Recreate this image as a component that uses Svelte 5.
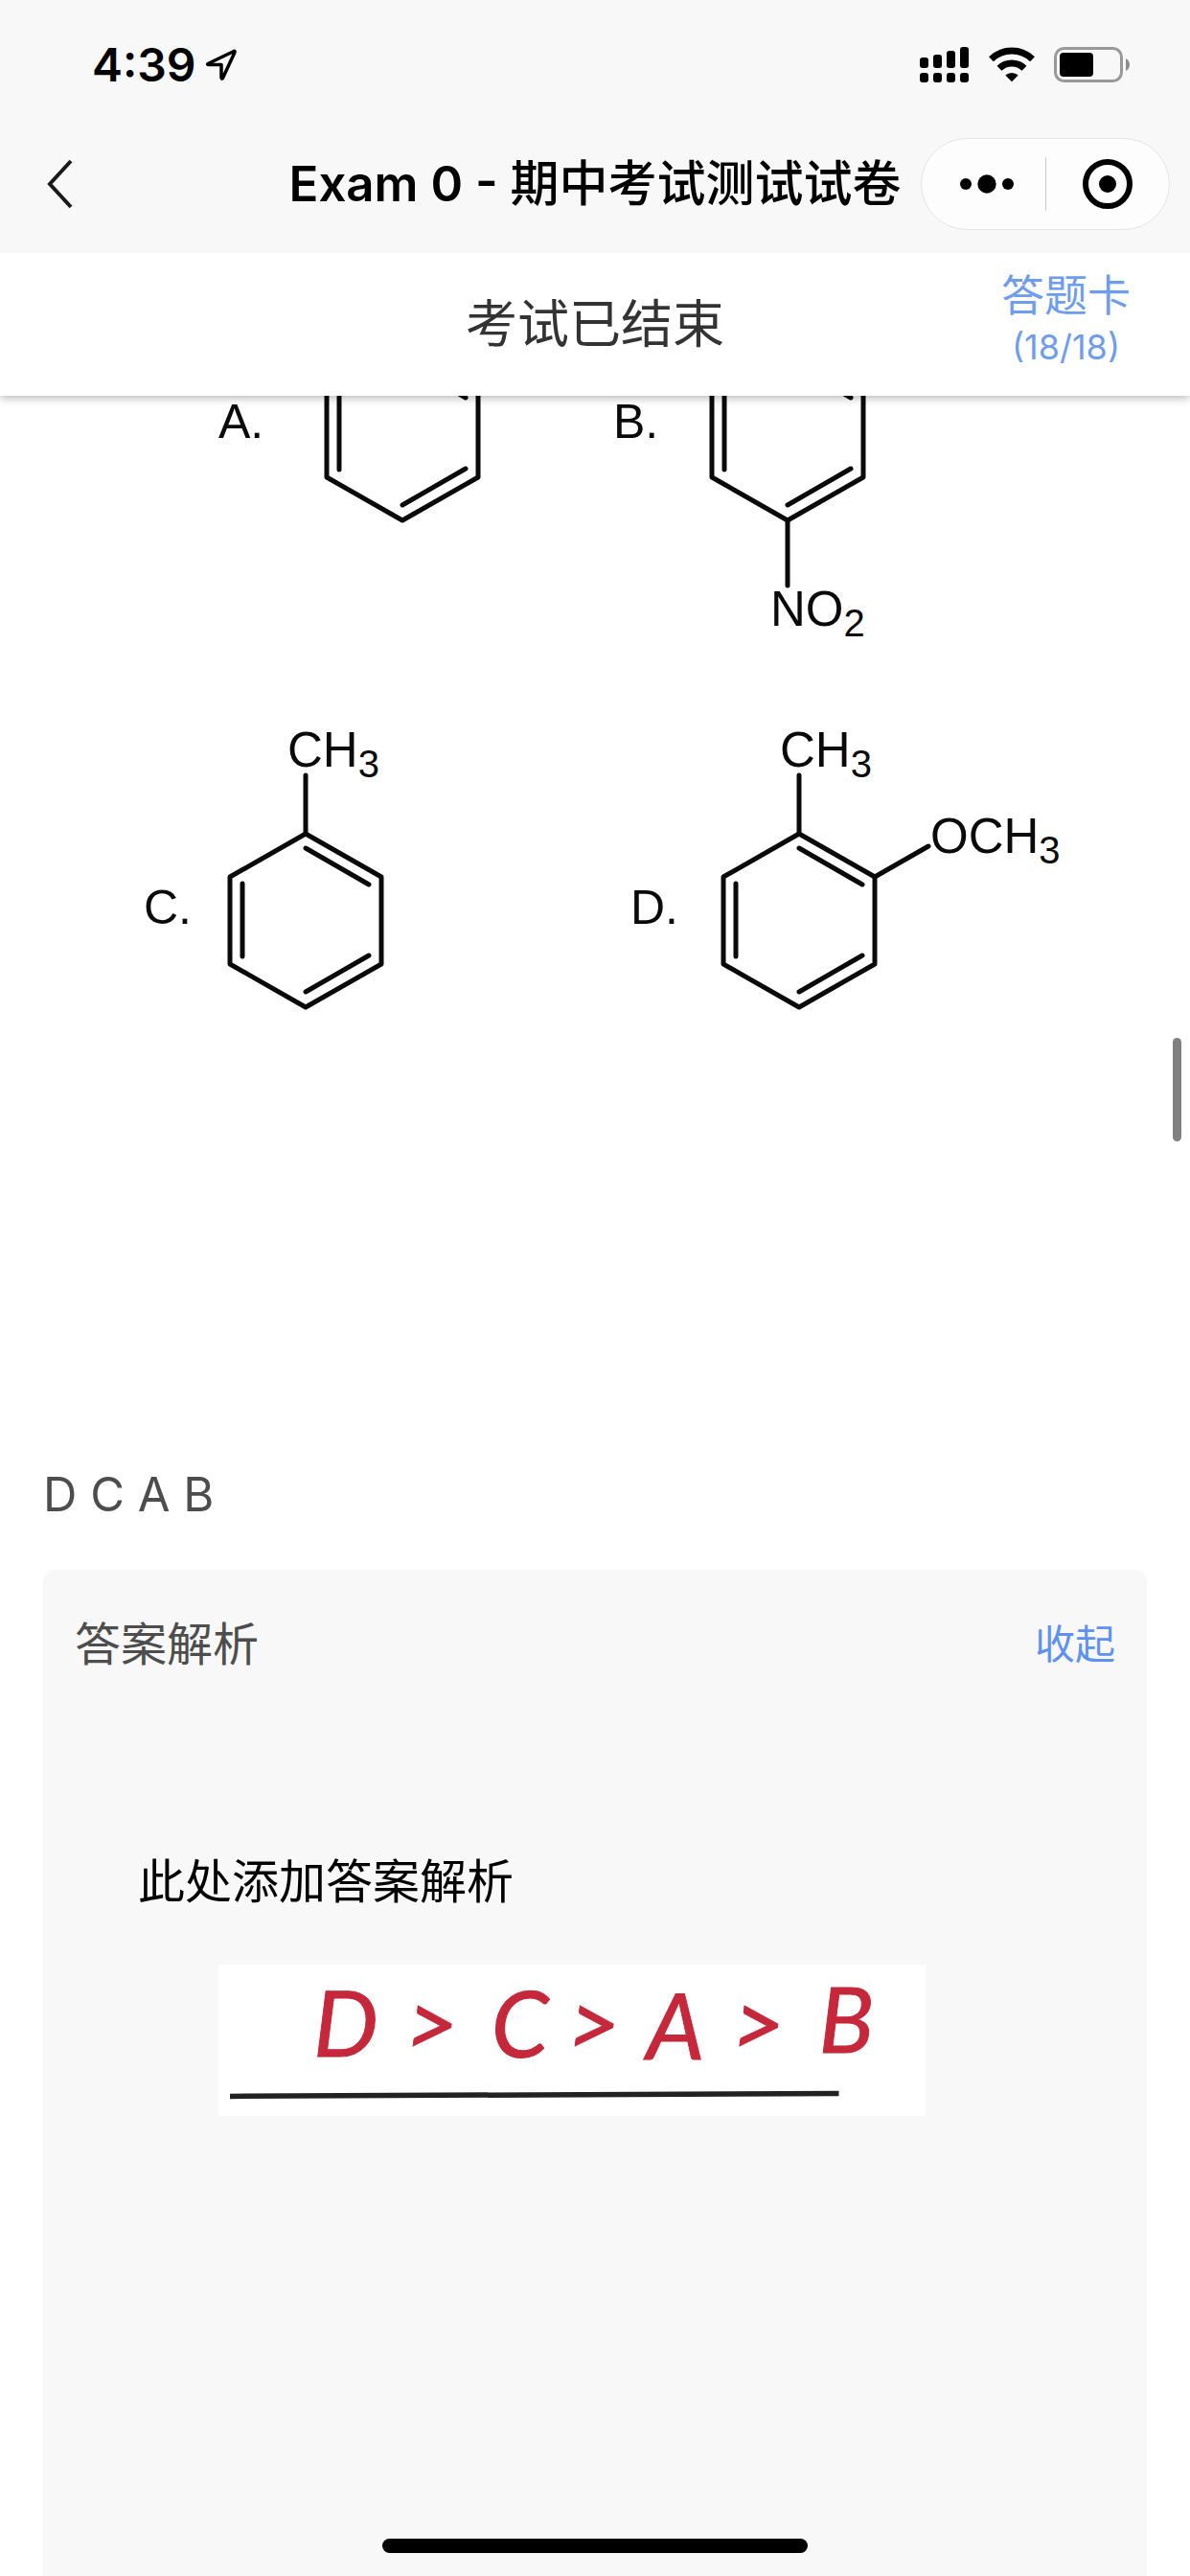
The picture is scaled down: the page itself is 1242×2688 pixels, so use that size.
<script>
  const answer = ['D', 'C', 'A', 'B'];
  const answered = 18;
  const total = 18;
  let expanded = $state(true);

  // Top vertex of every benzene ring in the question figure.
  const rings = [
    { x: 420, y: -51 },
    { x: 822, y: -51 },
    { x: 319, y: 457 },
    { x: 834, y: 457 }
  ];

  const labels = [
    { x: 228, y: 44, text: 'A.' },
    { x: 640, y: 44, text: 'B.' },
    { x: 150, y: 551, text: 'C.' },
    { x: 658, y: 551, text: 'D.' }
  ];

  const groups = [
    { x: 804, y: 240, text: 'NO', sub: '2' },
    { x: 300, y: 387, text: 'CH', sub: '3' },
    { x: 814, y: 387, text: 'CH', sub: '3' },
    { x: 971, y: 477, text: 'OCH', sub: '3' }
  ];
</script>

<div class="screen">
  <header class="top">
    <div class="status">
      <div class="clock">
        <span>4:39</span>
        <svg width="34" height="36" viewBox="0 0 34 36" aria-hidden="true">
          <path d="M30 3.500L3 16.500Q2 17.500 4 17.500H17V31Q17.500 33 18.500 31.500L31 4.500Q31.500 3 30 3.500Z" fill="none" stroke="#000" stroke-width="3.500" stroke-linejoin="round" />
        </svg>
      </div>
      <div class="signals">
        <svg width="52" height="38" viewBox="0 0 52 38" aria-hidden="true">
          <rect x="0" y="11" width="9" height="11" rx="3" />
          <rect x="14" y="8" width="9" height="14" rx="3" />
          <rect x="28" y="4" width="9" height="18" rx="3" />
          <rect x="42" y="0" width="9" height="22" rx="3" />
          <rect x="0" y="27" width="9" height="10" rx="3" />
          <rect x="14" y="27" width="9" height="10" rx="3" />
          <rect x="28" y="27" width="9" height="10" rx="3" />
          <rect x="42" y="27" width="9" height="10" rx="3" />
        </svg>
        <svg width="48" height="38" viewBox="0 0 48 38" aria-hidden="true">
          <path d="M2.500 12.700A31 31 0 0 1 45.500 12.700" fill="none" stroke="#000" stroke-width="7" />
          <path d="M11 22.300A18.500 18.500 0 0 1 37 22.300" fill="none" stroke="#000" stroke-width="7" />
          <path d="M17.300 29.500A10 10 0 0 1 30.700 29.500L24 36.200Z" />
        </svg>
        <svg width="80" height="38" viewBox="0 0 80 38" aria-hidden="true">
          <rect x="1.500" y="1.500" width="69" height="34" rx="9" fill="none" stroke="#999" stroke-width="3" />
          <rect x="6" y="6" width="35" height="25" rx="4" />
          <path d="M75 12Q79 14.500 79 18.500T75 25Z" fill="#8c8c8c" />
        </svg>
      </div>
    </div>
    <div class="nav">
      <button class="back" aria-label="Back">
        <svg width="30" height="54" viewBox="0 0 30 54" aria-hidden="true">
          <path d="M26 3L4 27L26 51" fill="none" stroke="#1a1a1a" stroke-width="4" />
        </svg>
      </button>
      <h1>Exam 0 - <span>期中考试测试试卷</span></h1>
      <div class="capsule">
        <button class="more" aria-label="More">
          <svg width="58" height="56" viewBox="0 0 58 56" aria-hidden="true">
            <circle cx="7" cy="28" r="6" />
            <circle cx="29" cy="28" r="9.700" />
            <circle cx="51" cy="28" r="6" />
          </svg>
        </button>
        <i></i>
        <button aria-label="Close">
          <svg width="56" height="56" viewBox="0 0 56 56" aria-hidden="true">
            <circle cx="28" cy="28" r="23" fill="none" stroke="#000" stroke-width="6" />
            <circle cx="28" cy="28" r="9" />
          </svg>
        </button>
      </div>
    </div>
  </header>

  <div class="exam-bar">
    <p>考试已结束</p>
    <button class="sheet">
      <span>答题卡</span>
      <small>({answered}/{total})</small>
    </button>
  </div>

  <main>
    <svg class="question" viewBox="0 0 1242 680" role="img" aria-label="Benzene derivatives A to D">
      <g fill="none" stroke="#0a0a0a" stroke-width="5" stroke-linecap="round" stroke-linejoin="round">
        {#each rings as ring}
          <path transform="translate({ring.x} {ring.y})" d="M0 0L79 45V136L0 181L-79 136V45ZM0 15L66 53M66 127L0 165M-66 52V128" />
        {/each}
        <path d="M822 130V198M319 396V457M834 396V457M913 502L969 470" />
      </g>
      {#each labels as label}
        <text x={label.x} y={label.y}>{label.text}</text>
      {/each}
      {#each groups as group}
        <text class="group" x={group.x} y={group.y}>{group.text}<tspan class="sub" dy="11">{group.sub}</tspan></text>
      {/each}
    </svg>

    <p class="answer">{answer.join(' ')}</p>

    <section class="analysis">
      <div class="analysis-head">
        <h2>答案解析</h2>
        <button onclick={() => (expanded = !expanded)}>{expanded ? '收起' : '展开'}</button>
      </div>
      {#if expanded}
        <p>此处添加答案解析</p>
        <svg class="note" viewBox="0 0 739 158" role="img" aria-label="D > C > A > B">
          <rect width="739" height="158" fill="#fff" />
          <g class="ink">
            <text x="99" y="96">D</text>
            <text x="195" y="96">&gt;</text>
            <text x="285" y="97">C</text>
            <text x="364" y="96">&gt;</text>
            <text x="447" y="99">A</text>
            <text x="536" y="96">&gt;</text>
            <text x="627" y="92">B</text>
          </g>
          <path d="M12 137.500L330 136L648 134.500" fill="none" stroke="#222" stroke-width="5.500" />
        </svg>
      {/if}
    </section>
  </main>

  <div class="scroll-thumb"></div>
  <div class="home"></div>
</div>

<style>
  :global(body) {
    margin: 0;
    background: #fff;
  }

  .screen {
    position: relative;
    height: 100vh;
    overflow: hidden;
    display: flex;
    flex-direction: column;
    background: #fff;
    color: #000;
    font-family: Inter, "Noto Sans CJK SC", sans-serif;
  }

  h1, h2, p {
    margin: 0;
    font-weight: 400;
  }

  button {
    box-sizing: border-box;
    padding: 0;
    border: 0;
    background: none;
    color: inherit;
    font: inherit;
    cursor: pointer;
  }

  svg {
    display: block;
  }

  .top {
    position: relative;
    z-index: 2;
    flex: none;
    background: #f8f8f8;
  }

  .status {
    display: flex;
    align-items: center;
    justify-content: space-between;
    height: 132px;
    padding: 4px 62px 0 96px;
    box-sizing: border-box;
  }

  .clock {
    display: flex;
    align-items: center;
    gap: 9px;
    font-size: 48px;
    line-height: 60px;
    font-weight: 600;
  }

  .signals {
    display: flex;
    gap: 20px;
  }

  .nav {
    display: grid;
    grid-template-columns: 1fr auto 1fr;
    align-items: center;
    height: 132px;
    padding-bottom: 12px;
    box-sizing: border-box;
  }

  .back {
    justify-self: start;
    padding: 20px 48px;
  }

  h1 {
    font-size: 51px;
    line-height: 60px;
    font-weight: 600;
    white-space: nowrap;
  }

  h1 span {
    font-weight: 500;
  }

  .capsule {
    justify-self: end;
    display: flex;
    align-items: center;
    width: 260px;
    height: 96px;
    margin-right: 21px;
    box-sizing: border-box;
    border: 1px solid #e4e4e4;
    border-radius: 48px;
    background: #fdfdfd;
  }

  .capsule button {
    width: 50%;
    display: flex;
    justify-content: center;
  }

  .capsule .more {
    padding-left: 8px;
  }

  .capsule i {
    flex: none;
    width: 1px;
    height: 56px;
    background: #c8c8c8;
  }

  .exam-bar {
    position: relative;
    z-index: 1;
    flex: none;
    display: grid;
    grid-template-columns: 1fr auto 1fr;
    align-items: center;
    height: 149px;
    background: #fff;
    box-shadow: 0 2px 9px rgba(0, 0, 0, 0.3);
  }

  .exam-bar p {
    grid-column: 2;
    color: #333;
    font-size: 54px;
    line-height: 72px;
  }

  .sheet {
    justify-self: end;
    display: flex;
    flex-direction: column;
    align-items: center;
    margin-right: 62px;
    padding-bottom: 8px;
    color: #6f9dee;
  }

  .sheet span {
    font-size: 45px;
    line-height: 54px;
  }

  .sheet small {
    font-size: 36px;
    line-height: 52px;
  }

  .question {
    width: 100%;
    height: auto;
    overflow: hidden;
    font-family: "Liberation Sans", Arial, sans-serif;
    font-size: 50px;
    fill: #0a0a0a;
  }

  .group {
    font-size: 51px;
  }

  .sub {
    font-size: 40px;
  }

  .answer {
    padding: 437px 45px 48px;
    color: #4d4d4d;
    font-size: 49px;
    line-height: 60px;
  }

  .analysis {
    min-height: 1200px;
    margin: 0 45px;
    padding: 48px 33px;
    box-sizing: border-box;
    border-radius: 12px;
    background: #f8f8f8;
  }

  .analysis-head {
    display: flex;
    align-items: center;
    justify-content: space-between;
    line-height: 60px;
  }

  h2 {
    color: #4d4d4d;
    font-size: 48px;
  }

  .analysis-head button {
    color: #5e92f2;
    font-size: 42px;
  }

  .analysis p {
    padding: 188px 66px 0;
    font-size: 49px;
    line-height: 60px;
  }

  .note {
    width: 68%;
    height: auto;
    margin: 56px 0 0 150px;
    overflow: visible;
  }

  .ink {
    fill: #c5283a;
    stroke: #c5283a;
    stroke-width: 1px;
    font-family: Lato, sans-serif;
    font-size: 96px;
    font-style: italic;
  }

  .scroll-thumb {
    position: absolute;
    top: 1083px;
    right: 9px;
    z-index: 2;
    width: 9px;
    height: 108px;
    border-radius: 5px;
    background: #808080;
  }

  .home {
    position: absolute;
    bottom: 24px;
    left: 50%;
    z-index: 2;
    width: 444px;
    height: 15px;
    margin-left: -222px;
    border-radius: 8px;
    background: #000;
  }
</style>
